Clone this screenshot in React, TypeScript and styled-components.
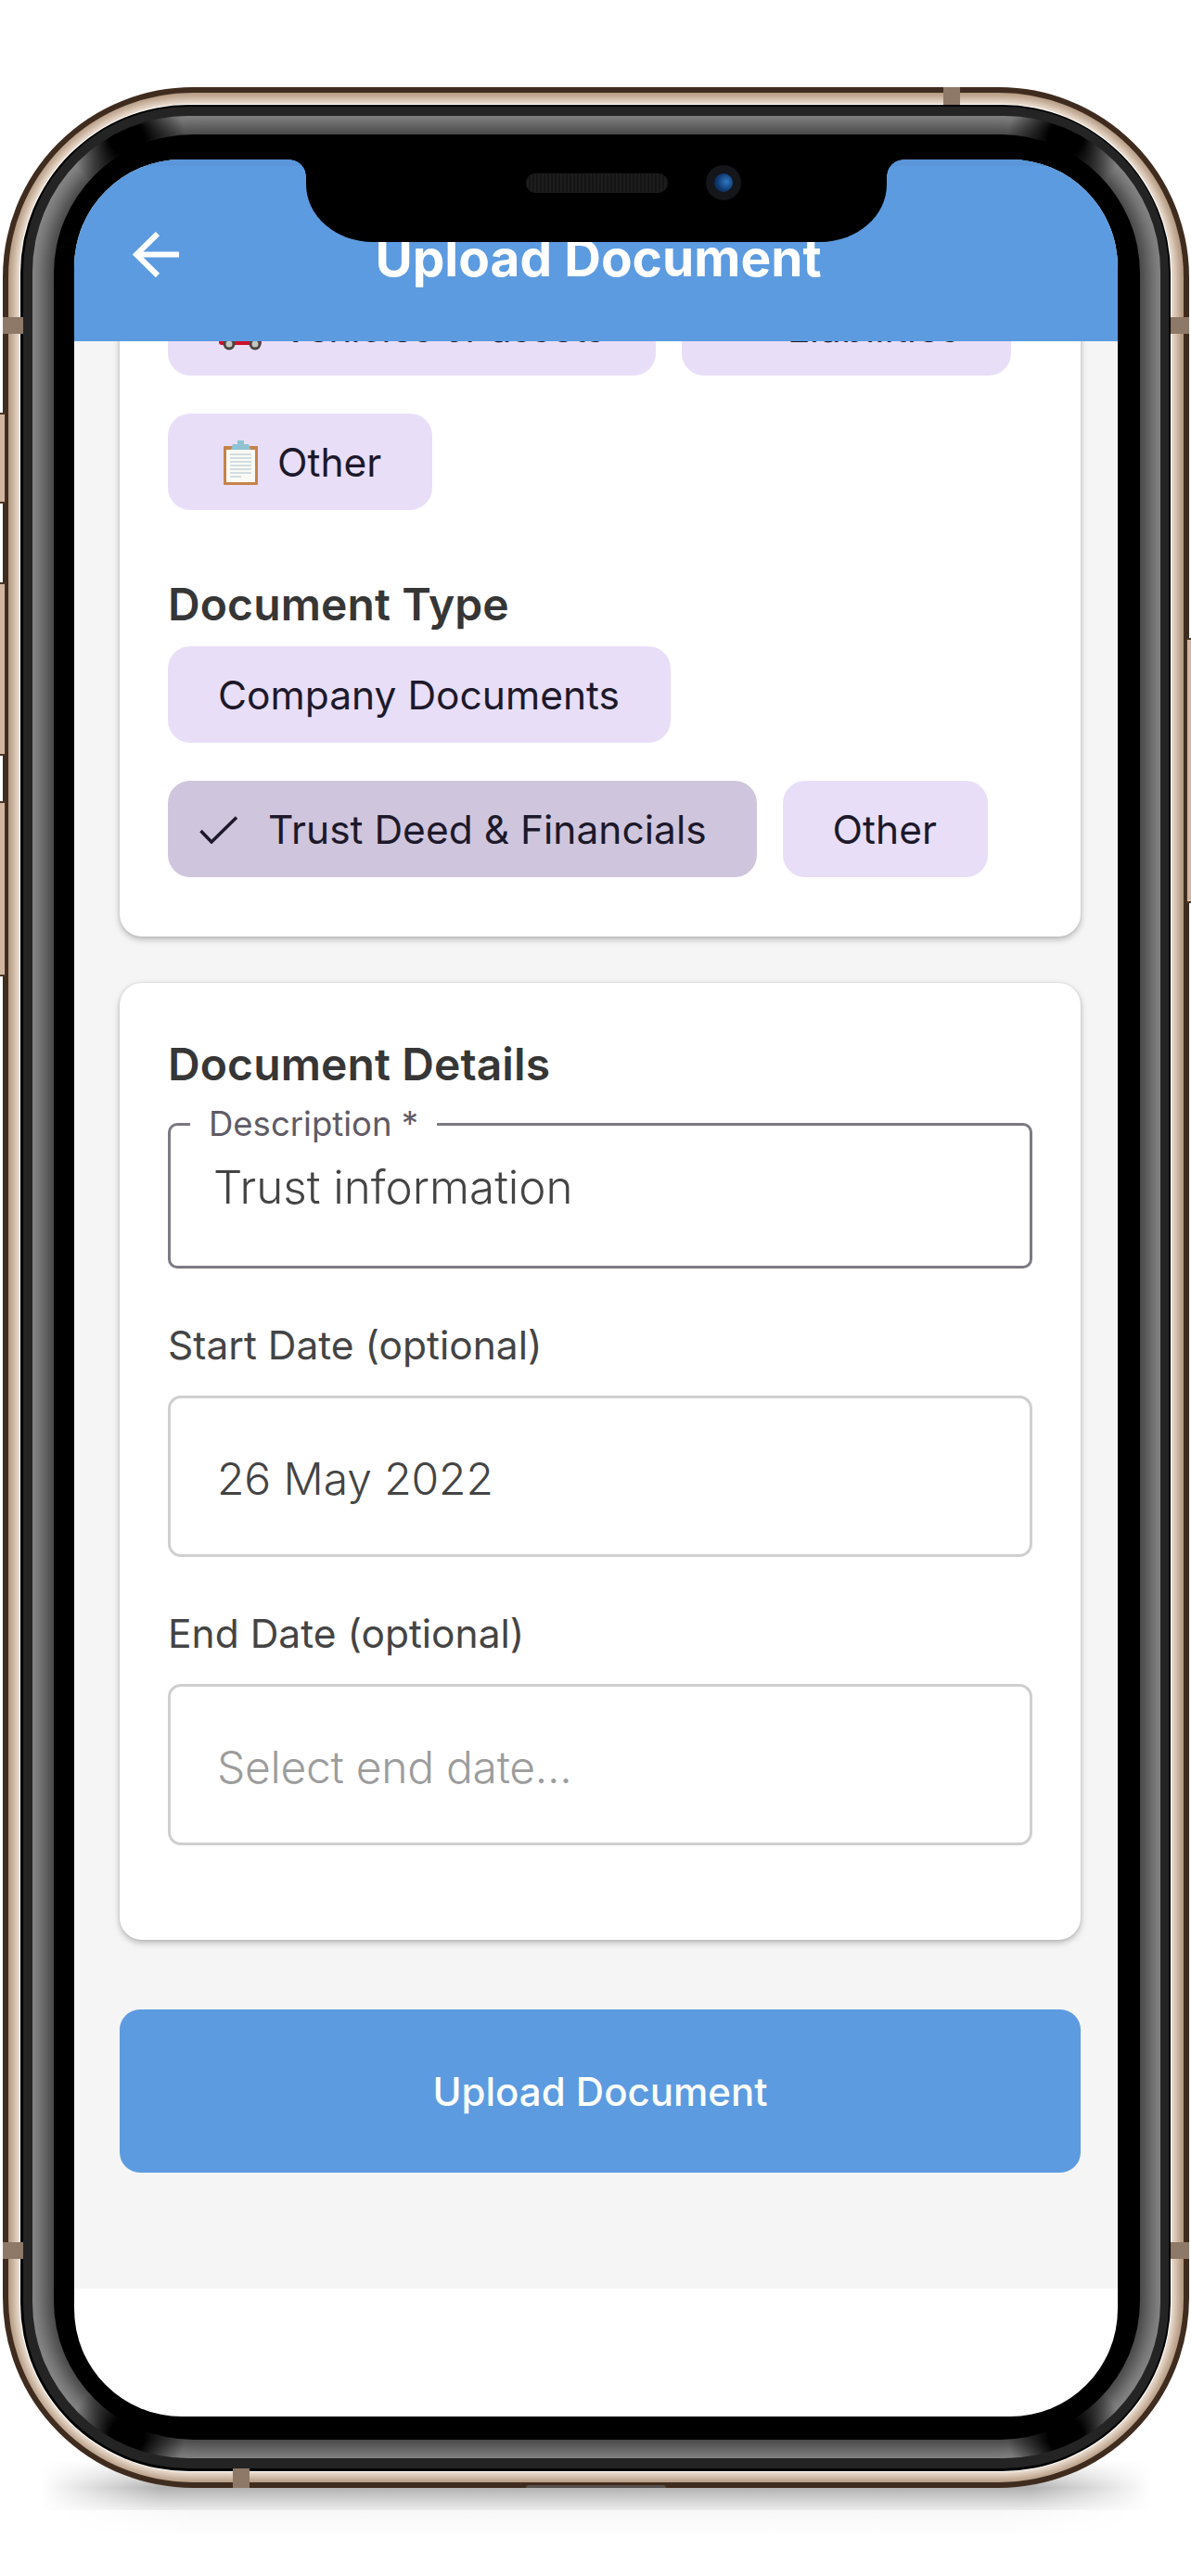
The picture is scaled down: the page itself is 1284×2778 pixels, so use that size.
import React from 'react';
import styled, { createGlobalStyle } from 'styled-components';

const Global = createGlobalStyle`
  html, body { margin: 0; padding: 0; background: #fff; }
  body { font-family: Inter, "Liberation Sans", sans-serif; }
  * { box-sizing: border-box; }
`;

const Stage = styled.div`
  width: 1284px;
  height: 2778px;
  padding: 94px 2px 0 3px;
  overflow: hidden;
  background: #fff;
`;

const Phone = styled.div`
  position: relative;
  isolation: isolate;
  width: 1279px;
  height: 2589px;
  &::before {
    content: '';
    position: absolute;
    z-index: -1;
    top: calc(100% - 30px);
    left: 40px;
    right: 40px;
    height: 54px;
    background: linear-gradient(to bottom, #b2b2b2 55%, #ececec 100%);
    -webkit-mask-image: linear-gradient(90deg, transparent, #000 130px, #000 calc(100% - 130px), transparent),
      linear-gradient(180deg, transparent, #000 30px);
    mask-image: linear-gradient(90deg, transparent, #000 130px, #000 calc(100% - 130px), transparent),
      linear-gradient(180deg, transparent, #000 30px);
    -webkit-mask-composite: source-in;
    mask-composite: intersect;
  }
  &::after {
    content: '';
    position: absolute;
    z-index: -1;
    top: calc(100% + 24px);
    left: 60px;
    right: 60px;
    height: 28px;
    background: linear-gradient(to bottom, #f7f7f7, #fff);
    -webkit-mask-image: linear-gradient(90deg, transparent, #000 150px, #000 calc(100% - 150px), transparent);
    mask-image: linear-gradient(90deg, transparent, #000 150px, #000 calc(100% - 150px), transparent);
  }
`;

const SideButton = styled.div<{ $side: 'left' | 'right'; $top: number; $height: number }>`
  position: absolute;
  z-index: 2;
  top: ${p => p.$top - 94}px;
  height: ${p => p.$height}px;
  ${p => (p.$side === 'left' ? 'left: -3px;' : 'right: -2px;')}
  width: ${p => (p.$side === 'left' ? 6 : 5)}px;
  background: #d3b6a0;
  border: solid #4a3526;
  border-width: ${p => (p.$side === 'left' ? '2px 1px 2px 0' : '2px 0 2px 1px')};
`;

const Band = styled.div<{ $x: number; $y: number; $w: number; $h: number }>`
  position: absolute;
  z-index: 1;
  left: ${p => p.$x - 3}px;
  top: ${p => p.$y - 94}px;
  width: ${p => p.$w}px;
  height: ${p => p.$h}px;
  background: #8e7868;
`;

const BottomBump = styled.div`
  position: absolute;
  z-index: 1;
  left: 564px;
  bottom: 0;
  width: 151px;
  height: 3px;
  border-radius: 6px 6px 0 0;
  background: #55504c;
`;

const Rim = styled.div`
  width: 100%;
  height: 100%;
  border: 6px solid #3f2c1e;
  border-radius: 205px;
  background: #a88a70;
  overflow: hidden;
  padding: 13px 14px 12px 13px;
`;

const Core = styled.div`
  width: 100%;
  height: 100%;
  border-radius: 182px;
  background: #000;
  box-shadow: 0 0 0 1px #fff, 0 0 14px 6px #fff6ec;
  padding: 2px 2px 3px 3px;
`;

const DarkRing = styled.div`
  width: 100%;
  height: 100%;
  border-radius: 178px;
  background: #242424;
  padding: 10px 9px 11px 10px;
`;

const Glass = styled.div`
  width: 100%;
  height: 100%;
  border-radius: 168px;
  background:
    radial-gradient(circle 62px at 102px 24px, #000 30%, transparent),
    radial-gradient(circle 62px at calc(100% - 102px) 24px, #000 30%, transparent),
    radial-gradient(circle 62px at 102px calc(100% - 24px), #000 30%, transparent),
    radial-gradient(circle 62px at calc(100% - 102px) calc(100% - 24px), #000 30%, transparent),
    #8c8c8c;
  overflow: hidden;
  padding: 20px 22px 20px 23px;
`;

const Bezel = styled.div`
  width: 100%;
  height: 100%;
  border-radius: 150px;
  background: #000;
  box-shadow: 0 0 22px 9px rgba(0, 0, 0, 0.6);
  padding: 27px 24px 25px 22px;
`;

const Screen = styled.div`
  position: relative;
  width: 100%;
  height: 100%;
  border-radius: 116px;
  background: #fff;
  overflow: hidden;
`;

const Notch = styled.div`
  position: absolute;
  z-index: 3;
  top: 0;
  left: 250px;
  width: 626px;
  height: 89px;
  display: flex;
  align-items: flex-start;
  gap: 41px;
  padding: 6px 0 0 237px;
  background: #000;
  border-radius: 0 0 72px 72px / 0 0 62px 62px;
  &::before,
  &::after {
    content: '';
    position: absolute;
    top: 0;
    width: 18px;
    height: 18px;
  }
  &::before {
    left: -18px;
    background: radial-gradient(circle at 0 100%, transparent 17.5px, #000 18px);
  }
  &::after {
    right: -18px;
    background: radial-gradient(circle at 100% 100%, transparent 17.5px, #000 18px);
  }
`;

const Speaker = styled.div`
  width: 153px;
  height: 21px;
  margin-top: 9px;
  border-radius: 10px;
  background: repeating-linear-gradient(90deg, #1d1d1d 0 2px, #141414 2px 4px);
  border: 1px solid #1b1b1b;
`;

const Camera = styled.div`
  width: 38px;
  height: 38px;
  border-radius: 50%;
  background: #14161a;
  display: flex;
  align-items: center;
  justify-content: center;
`;

const Lens = styled.div`
  width: 20px;
  height: 20px;
  border-radius: 50%;
  background: radial-gradient(circle at 65% 45%, #2f78c0, #0f3a72 55%, #061a3c);
`;

const Header = styled.header`
  height: 196px;
  display: flex;
  align-items: flex-start;
  padding: 72px 108px 0 63px;
  background: #5c9be0;
  box-shadow: inset 0 7px 0 #5a96d9;
`;

const BackIcon = styled.svg`
  width: 50px;
  height: 50px;
  margin-top: 6px;
  flex: none;
`;

const Title = styled.h1`
  flex: 1;
  margin: 0;
  text-align: center;
  font-size: 55px;
  line-height: 68px;
  font-weight: 700;
  color: #fff;
`;

const Scroller = styled.main`
  height: 2100px;
  overflow: hidden;
  background: #f5f5f5;
  padding: 0 40px 0 49px;
`;

const Card = styled.section<{ $first?: boolean }>`
  display: flex;
  flex-direction: column;
  margin-top: ${p => (p.$first ? -120 : 50)}px;
  padding: ${p => (p.$first ? '53px 52px 64px 52px' : '58px 52px 102px 52px')};
  background: #fff;
  border-radius: 24px;
  box-shadow: 0 3px 7px rgba(0, 0, 0, 0.26), 0 0 3px rgba(0, 0, 0, 0.1);
`;

const ChipGroup = styled.div`
  display: flex;
  flex-wrap: wrap;
  gap: 41px 28px;
`;

const Chip = styled.div<{ $selected?: boolean }>`
  height: 104px;
  display: inline-flex;
  align-items: center;
  gap: ${p => (p.$selected ? 33 : 21)}px;
  padding: 1px ${p => (p.$selected ? '54px 0 34px' : '55px 0 54px')};
  border-radius: 24px;
  background: ${p => (p.$selected ? '#cfc6dd' : '#e8def8')};
  color: #1d192b;
  font-size: 42.5px;
  line-height: 52px;
  white-space: nowrap;
`;

const TightLabel = styled.span`
  letter-spacing: -0.9px;
`;

const Glyph = styled.svg<{ $inset?: number }>`
  flex: none;
  margin-left: ${p => p.$inset ?? 0}px;
`;

const Heading = styled.h2`
  margin: 0;
  font-size: 48px;
  line-height: 60px;
  font-weight: 600;
  letter-spacing: 0.1px;
  color: #363636;
`;

const TypeHeading = styled(Heading)`
  margin: 72px 0 15px;
`;

const DescriptionField = styled.fieldset`
  margin: 12px 0 0;
  padding: 0;
  height: 178px;
  border: 3px solid #7d7983;
  border-radius: 10px;
`;

const DescriptionLegend = styled.legend`
  margin-left: 21px;
  padding: 0 20px;
  font-size: 36.5px;
  line-height: 44px;
  color: #5f5b66;
`;

const DescriptionValue = styled.div`
  margin-top: 16px;
  padding-left: 46px;
  font-size: 49.3px;
  line-height: 60px;
  font-weight: 350;
  color: #444;
`;

const FieldLabel = styled.label`
  margin: 57px 0 28px;
  font-size: 42.5px;
  line-height: 52px;
  font-weight: 420;
  color: #444;
`;

const DateField = styled.div<{ $empty?: boolean }>`
  height: 174px;
  display: flex;
  align-items: center;
  padding: 4px 0 0 50px;
  border: 3px solid #cfcfcf;
  border-radius: 14px;
  font-size: 48px;
  font-weight: 350;
  letter-spacing: ${p => (p.$empty ? '-0.3px' : '-0.1px')};
  color: ${p => (p.$empty ? '#9c9c9c' : '#444')};
`;

const SubmitButton = styled.button`
  display: block;
  width: 100%;
  height: 176px;
  margin-top: 75px;
  border: 0;
  border-radius: 22px;
  background: #5c9be0;
  color: #fff;
  font-family: inherit;
  font-size: 42px;
  font-weight: 500;
`;

const Car = () => (
  <Glyph width="48" height="48" viewBox="0 0 48 48">
    <path d="M1 32l5-14c1-2 2-3 4-3h26c2 0 3 1 4 3l7 14v7c0 2-1 3-3 3H4c-2 0-3-1-3-3z" fill="#d0102a" />
    <path d="M11 18h11v10H8zM25 18h11l5 10H25z" fill="#b8dcef" />
    <circle cx="12" cy="41" r="6.5" fill="#4b4640" />
    <circle cx="12" cy="41" r="3.5" fill="#c4c4c4" />
    <circle cx="40" cy="41" r="6.5" fill="#4b4640" />
    <circle cx="40" cy="41" r="3.5" fill="#c4c4c4" />
  </Glyph>
);

const Clipboard = () => (
  <Glyph $inset={6} width="37" height="48" viewBox="0 0 37 48">
    <rect x="0" y="6" width="37" height="42" rx="1" fill="#c78349" />
    <rect x="3" y="10" width="31" height="35" fill="#fbfbf6" />
    <path d="M7 15h23M7 19h23M7 23h23M7 27h23M7 31h23M7 35h23M7 39h12" stroke="#c5d3da" strokeWidth="1.6" />
    <path d="M15 0h7v4h5l2 6H8l2-6h5z" fill="#8fc3d2" />
  </Glyph>
);

const MoneyBag = () => (
  <Glyph width="39" height="30" viewBox="0 0 44 30">
    <path d="M17 2h10l-3 6c6 3 10 9 10 14 0 5-5 7-12 7s-12-2-12-7c0-5 4-11 10-14z" fill="#e3b23c" />
  </Glyph>
);

const Check = () => (
  <Glyph width="41" height="30" viewBox="0 0 41 30">
    <path d="M1.5 16L13 28L40 1.5" fill="none" stroke="#1d192b" strokeWidth="3.5" />
  </Glyph>
);

export default function App() {
  return (
    <>
      <Global />
      <Stage>
        <Phone>
          <SideButton $side="left" $top={445} $height={98} />
          <SideButton $side="left" $top={628} $height={187} />
          <SideButton $side="left" $top={864} $height={189} />
          <SideButton $side="right" $top={688} $height={286} />
          <Band $x={1017} $y={94} $w={18} $h={19} />
          <Band $x={3} $y={342} $w={22} $h={18} />
          <Band $x={1262} $y={342} $w={20} $h={18} />
          <Band $x={251} $y={2662} $w={18} $h={21} />
          <Band $x={3} $y={2418} $w={22} $h={18} />
          <Band $x={1262} $y={2418} $w={20} $h={18} />
          <BottomBump />
          <Rim>
            <Core>
              <DarkRing>
                <Glass>
                  <Bezel>
                    <Screen>
                      <Notch>
                        <Speaker />
                        <Camera>
                          <Lens />
                        </Camera>
                      </Notch>
                      <Header>
                        <BackIcon viewBox="0 0 50 50">
                          <path d="M50 24.5H4M27 2L4 24.5L27 47" fill="none" stroke="#fff" strokeWidth="6" />
                        </BackIcon>
                        <Title>Upload Document</Title>
                      </Header>
                      <Scroller>
                        <Card $first>
                          <ChipGroup>
                            <Chip><Car /><TightLabel>Vehicles or assets</TightLabel></Chip>
                            <Chip><MoneyBag />Liabilities</Chip>
                            <Chip><Clipboard />Other</Chip>
                          </ChipGroup>
                          <TypeHeading>Document Type</TypeHeading>
                          <ChipGroup>
                            <Chip>Company Documents</Chip>
                            <Chip $selected><Check />Trust Deed &amp; Financials</Chip>
                            <Chip>Other</Chip>
                          </ChipGroup>
                        </Card>
                        <Card>
                          <Heading>Document Details</Heading>
                          <DescriptionField>
                            <DescriptionLegend>Description *</DescriptionLegend>
                            <DescriptionValue>Trust information</DescriptionValue>
                          </DescriptionField>
                          <FieldLabel>Start Date (optional)</FieldLabel>
                          <DateField>26 May 2022</DateField>
                          <FieldLabel>End Date (optional)</FieldLabel>
                          <DateField $empty>Select end date...</DateField>
                        </Card>
                        <SubmitButton>Upload Document</SubmitButton>
                      </Scroller>
                    </Screen>
                  </Bezel>
                </Glass>
              </DarkRing>
            </Core>
          </Rim>
        </Phone>
      </Stage>
    </>
  );
}
